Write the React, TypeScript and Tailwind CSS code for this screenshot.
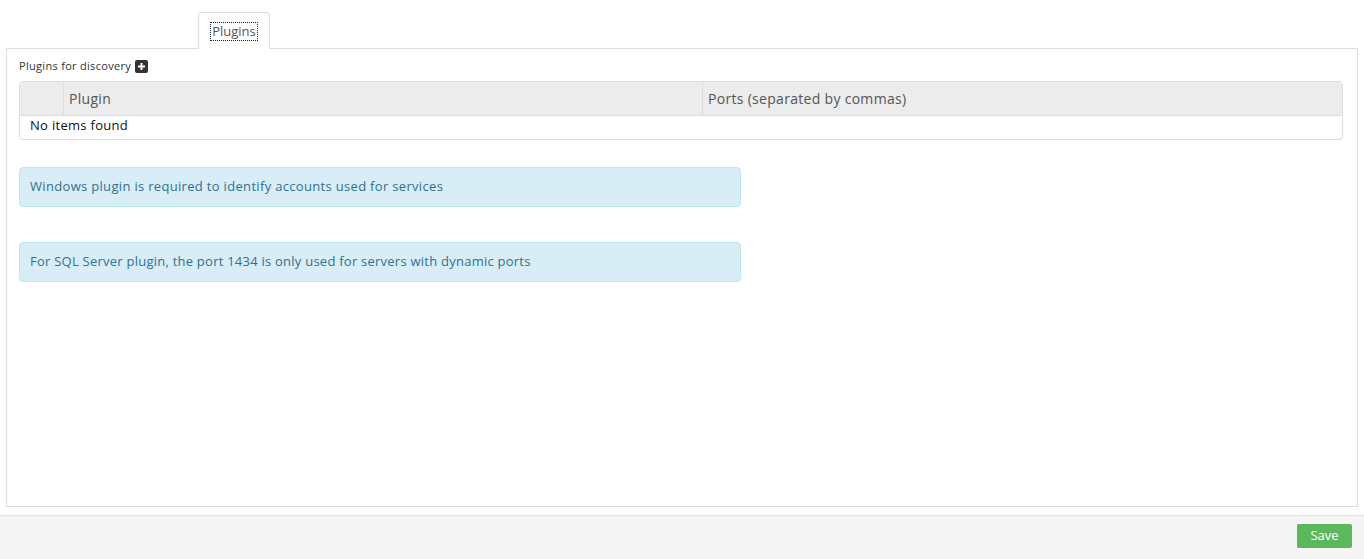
export default function App() {
  const font = { fontFamily: '"Open Sans", "Liberation Sans", sans-serif' };
  return (
    <div className="w-[1364px] h-[559px] bg-white flex flex-col text-[#333]" style={font}>
      <div className="flex flex-col px-[6px] pt-[11px] h-[507px]">
        <div className="flex pl-[192px] h-[37px]">
          <div className="w-[72px] h-[37px] border border-[#ddd] border-b-0 rounded-t-[4px] bg-white flex items-center justify-center relative top-[1px]">
            <span className="text-[13px] text-[#555] leading-[17px] outline-1 outline-dotted outline-[#222] px-[1px]">Plugins</span>
          </div>
        </div>
        <div className="flex-1 border border-[#ddd] pl-[12px] pr-[14px] pt-[9px]">
          <div className="flex items-center gap-[4px] h-[16px] text-[11px] tracking-[0.3px] text-[#333]">
            <span>Plugins for discovery</span>
            <span className="w-[13px] h-[13px] bg-[#333] rounded-[2px] flex items-center justify-center">
              <svg width="9" height="9" viewBox="0 0 9 9"><path d="M3.5 1h2v2.5H8v2H5.5V8h-2V5.5H1v-2h2.5z" fill="#fff" /></svg>
            </span>
          </div>
          <div className="mt-[7px] border border-[#ddd] rounded-[4px] overflow-hidden text-[13px]">
            <div className="flex h-[34px] bg-[#ececec] border-b border-[#ddd] text-[#555] text-[14px] tracking-[0.3px]">
              <div className="w-[44px] border-r border-[#ddd]"></div>
              <div className="w-[639px] border-r border-[#ddd] flex items-center px-[5px]">Plugin</div>
              <div className="flex-1 flex items-center px-[5px]">Ports (separated by commas)</div>
            </div>
            <div className="h-[23px] flex items-center pb-[4px] px-[10px] text-[#111] tracking-[0.3px]">No items found</div>
          </div>
          <div className="mt-[27px] w-[722px] h-[40px] bg-[#d9edf7] border border-[#bce8f1] rounded-[4px] flex items-center px-[10px] text-[13px] tracking-[0.32px] text-[#31708f]">
            Windows plugin is required to identify accounts used for services
          </div>
          <div className="mt-[35px] w-[722px] h-[40px] bg-[#d9edf7] border border-[#bce8f1] rounded-[4px] flex items-center px-[10px] text-[13px] tracking-[0.24px] text-[#31708f]">
            For SQL Server plugin, the port 1434 is only used for servers with dynamic ports
          </div>
        </div>
      </div>
      <div className="mt-[8px] flex-1 bg-[#f5f5f5] border-t border-[#e5e5e5] flex justify-end items-start pt-[8px] pr-[12px]">
        <button className="w-[55px] h-[24px] bg-[#5cb85c] text-white text-[13px] rounded-[2px] flex items-center justify-center">Save</button>
      </div>
    </div>
  );
}
